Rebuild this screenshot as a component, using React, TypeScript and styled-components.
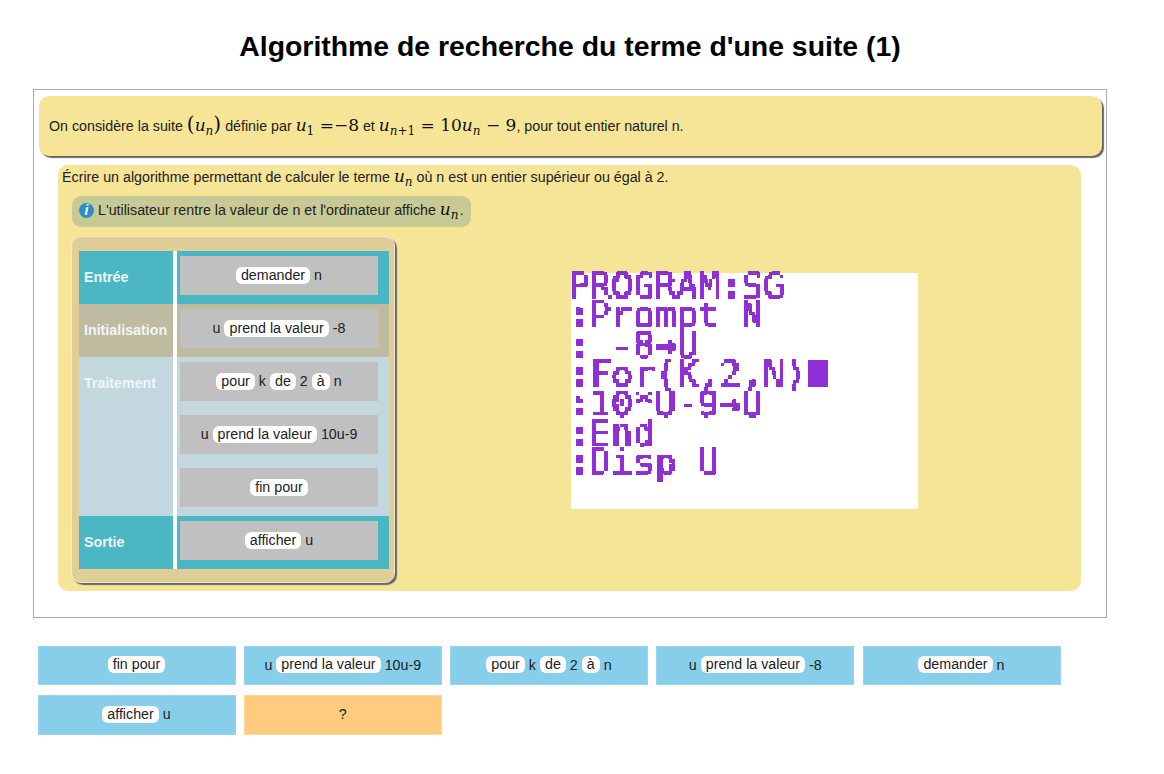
import React from 'react'
import styled, { createGlobalStyle } from 'styled-components'

const GlobalStyle = createGlobalStyle`
  html, body {
    margin: 0;
    padding: 0;
    background: #fff;
    color: #222;
    font-family: "Liberation Sans", Arial, sans-serif;
    font-size: 14.25px;
  }
`

const Page = styled.div`
  width: 1164px;
  height: 774px;
  overflow: hidden;
  box-sizing: border-box;
  padding-top: 29px;
`

const Title = styled.h1`
  width: 1140px;
  margin: 0;
  height: 60px;
  line-height: 34px;
  font-size: 28.4px;
  font-weight: 700;
  color: #000;
  text-align: center;
`

const Frame = styled.div`
  box-sizing: border-box;
  width: 1074px;
  height: 529px;
  margin-left: 33px;
  border: 1px solid #aaa;
  padding: 6px 4px 0 5px;
`

const Statement = styled.div`
  box-sizing: border-box;
  height: 60px;
  padding: 0 10px 1px;
  display: flex;
  align-items: center;
  background: #f6e497;
  border-radius: 10px;
  box-shadow: 2px 2px 1px #666;
`

const Question = styled.div`
  box-sizing: border-box;
  width: 1023px;
  height: 426px;
  margin: 9px 0 0 19px;
  padding: 0 13px;
  background: #f6e497;
  border-radius: 10px;
`

const QuestionText = styled.div`
  box-sizing: border-box;
  height: 31px;
  padding-top: 1px;
  line-height: 22px;
  margin-left: -9px;
`

const Hint = styled.div`
  display: flex;
  align-items: center;
  box-sizing: border-box;
  width: 399px;
  height: 31px;
  margin-left: 1px;
  padding: 0 4px 3px 7px;
  background: #c8ca96;
  border-radius: 9px;
`

const InfoIcon = styled.span`
  flex: none;
  width: 15px;
  height: 15px;
  margin-right: 4px;
  border-radius: 50%;
  background: #2a8ec8;
  color: #fff;
  font: italic 700 14px/15px "Liberation Sans", sans-serif;
  text-align: center;
`

const Workspace = styled.div`
  display: flex;
  align-items: flex-start;
  margin-top: 9px;
`

const Panel = styled.div`
  flex: none;
  box-sizing: border-box;
  width: 324px;
  height: 347px;
  padding: 14px 5px 0 7px;
  background: #e0cd98;
  border: 1px solid #f3ead0;
  border-radius: 10px;
  box-shadow: 2px 2px 1px #666;
`

const Row = styled.div<{ $tone: 'io' | 'init' | 'work' }>`
  display: flex;
  background: ${(p) =>
    p.$tone === 'io' ? '#4bb6c4' : p.$tone === 'init' ? '#bfbba0' : '#c2d7de'};
`

const RowLabel = styled.div<{ $top?: boolean }>`
  box-sizing: border-box;
  width: 94px;
  padding-left: 5px;
  padding-top: ${(p) => (p.$top ? '18px' : '0')};
  display: flex;
  align-items: ${(p) => (p.$top ? 'flex-start' : 'center')};
  color: #eef6f8;
  font-weight: 700;
  line-height: 17px;
`

const RowSlots = styled.div`
  flex: 1;
  border-left: 4px solid #fff;
  padding: 5px 11px 9px 3px;
  display: flex;
  flex-direction: column;
  gap: 14px;
`

const Slot = styled.div`
  box-sizing: border-box;
  height: 39px;
  display: flex;
  align-items: center;
  justify-content: center;
  background: #c0c0c0;
  white-space: pre;
  padding-bottom: 1px;
`

const Keyword = styled.span`
  background: #fff;
  border-radius: 6px;
  padding: 0 5px;
  margin: 0 4px;
  line-height: 17px;

  &:first-child {
    margin-left: 0;
  }

  &:last-child {
    margin-right: 0;
  }
`

const Screen = styled.div`
  flex: none;
  box-sizing: border-box;
  width: 347px;
  height: 236px;
  margin: 37px 0 0 176px;
  background: #fff;
  color: #902fd6;
`

const ScreenText = styled.div`
  margin: -2px 0 0 -3px;
  height: 238px;
  font: 400 36px/29.4px "DejaVu Sans Mono", monospace;
  white-space: pre;
  filter: url(#calc-pixels);
`

const ScreenLine = styled.div`
  height: 29.4px;
`

const ScreenMark = styled.span`
  font-weight: 700;
`

const Cursor = styled.span`
  display: inline-block;
  width: 18px;
  height: 26px;
  margin-left: 3px;
  background: #902fd6;
  vertical-align: -1px;
`

const HiddenDefs = styled.svg`
  position: absolute;
  width: 0;
  height: 0;
`

const Tray = styled.div`
  display: flex;
  flex-wrap: wrap;
  gap: 10px 8.25px;
  width: 1040px;
  margin: 27.6px 0 0 37.5px;
`

const Card = styled.div<{ $unknown?: boolean }>`
  box-sizing: border-box;
  width: 198px;
  height: 39.5px;
  display: flex;
  align-items: center;
  justify-content: center;
  background: ${(p) => (p.$unknown ? '#ffcc7f' : '#87ceeb')};
  border: 1px solid ${(p) => (p.$unknown ? '#ffd596' : '#97d5ee')};
  white-space: pre;
  padding-bottom: 1px;
`

const MathText = styled.span`
  font-family: "DejaVu Serif", "Liberation Serif", serif;
  font-size: 17px;
  line-height: 0;
  white-space: pre;
  color: #111;
`

const MathVar = styled.i`
  font-style: italic;
`

const MathSub = styled.sub`
  font-size: 12px;
  line-height: 0;
  vertical-align: -4px;
`

const Paren = styled.span`
  font-size: 20px;
`

const Un = ({ sub = <MathVar>n</MathVar> }: { sub?: React.ReactNode }) => (
  <>
    <MathVar>u</MathVar>
    <MathSub>{sub}</MathSub>
  </>
)

type Token = { text: string; kw?: boolean }

const kw = (text: string): Token => ({ text, kw: true })
const tx = (text: string): Token => ({ text })

const DEMANDER = [kw('demander'), tx('n')]
const INIT = [tx('u'), kw('prend la valeur'), tx('-8')]
const POUR = [kw('pour'), tx('k'), kw('de'), tx('2'), kw('à'), tx('n')]
const CALCUL = [tx('u'), kw('prend la valeur'), tx('10u-9')]
const FIN = [kw('fin pour')]
const AFFICHER = [kw('afficher'), tx('u')]

const Tokens = ({ items }: { items: Token[] }) => (
  <>
    {items.map((t, i) => (t.kw ? <Keyword key={i}>{t.text}</Keyword> : <span key={i}>{t.text}</span>))}
  </>
)

const rows = [
  { label: 'Entrée', tone: 'io' as const, slots: [DEMANDER] },
  { label: 'Initialisation', tone: 'init' as const, slots: [INIT] },
  { label: 'Traitement', tone: 'work' as const, top: true, slots: [POUR, CALCUL, FIN] },
  { label: 'Sortie', tone: 'io' as const, slots: [AFFICHER] },
]

const program = [
  'PROGRAM:SG',
  ':Prompt N',
  ': -8→U',
  ':For(K,2,N)',
  ':10*U-9→U',
  ':End',
  ':Disp U',
]

const cards = [FIN, CALCUL, POUR, INIT, DEMANDER, AFFICHER]

export default function App() {
  return (
    <Page>
      <GlobalStyle />
      <HiddenDefs aria-hidden="true">
        {/* blocky look of the calculator screen, the text itself stays real text */}
        <filter id="calc-pixels" x="0" y="0" width="100%" height="100%" colorInterpolationFilters="sRGB">
          <feFlood x="1" y="1" width="2" height="2" />
          <feComposite width="4" height="4" />
          <feTile result="grid" />
          <feComposite in="SourceGraphic" in2="grid" operator="in" />
          <feMorphology operator="dilate" radius="1" />
          <feComponentTransfer>
            <feFuncA type="discrete" tableValues="0 1 1 1" />
          </feComponentTransfer>
        </filter>
      </HiddenDefs>
      <Title>Algorithme de recherche du terme d'une suite (1)</Title>
      <Frame>
        <Statement>
          <span>
            On considère la suite{' '}
            <MathText>
              <Paren>(</Paren>
              <Un />
              <Paren>)</Paren>
            </MathText>{' '}
            définie par{' '}
            <MathText>
              <Un sub="1" /> =−8
            </MathText>{' '}
            et{' '}
            <MathText>
              <Un sub={<><MathVar>n</MathVar>+1</>} /> = 10
              <Un /> − 9
            </MathText>
            , pour tout entier naturel n.
          </span>
        </Statement>
        <Question>
          <QuestionText>
            Écrire un algorithme permettant de calculer le terme{' '}
            <MathText>
              <Un />
            </MathText>{' '}
            où n est un entier supérieur ou égal à 2.
          </QuestionText>
          <Hint>
            <InfoIcon>i</InfoIcon>
            <span>
              L'utilisateur rentre la valeur de n et l'ordinateur affiche{' '}
              <MathText>
                <Un />
              </MathText>
              {'\u200a.'}
            </span>
          </Hint>
          <Workspace>
            <Panel>
              {rows.map((r) => (
                <Row key={r.label} $tone={r.tone}>
                  <RowLabel $top={r.top}>{r.label}</RowLabel>
                  <RowSlots>
                    {r.slots.map((s, i) => (
                      <Slot key={i}>
                        <Tokens items={s} />
                      </Slot>
                    ))}
                  </RowSlots>
                </Row>
              ))}
            </Panel>
            <Screen>
              <ScreenText>
                {program.map((line, i) => (
                  <ScreenLine key={i}>
                    {line.split(/([:→])/).map((part, j) =>
                      part === ':' || part === '→' ? <ScreenMark key={j}>{part}</ScreenMark> : part,
                    )}
                    {i === 3 && <Cursor />}
                  </ScreenLine>
                ))}
              </ScreenText>
            </Screen>
          </Workspace>
        </Question>
      </Frame>
      <Tray>
        {cards.map((c, i) => (
          <Card key={i}>
            <Tokens items={c} />
          </Card>
        ))}
        <Card $unknown>?</Card>
      </Tray>
    </Page>
  )
}
